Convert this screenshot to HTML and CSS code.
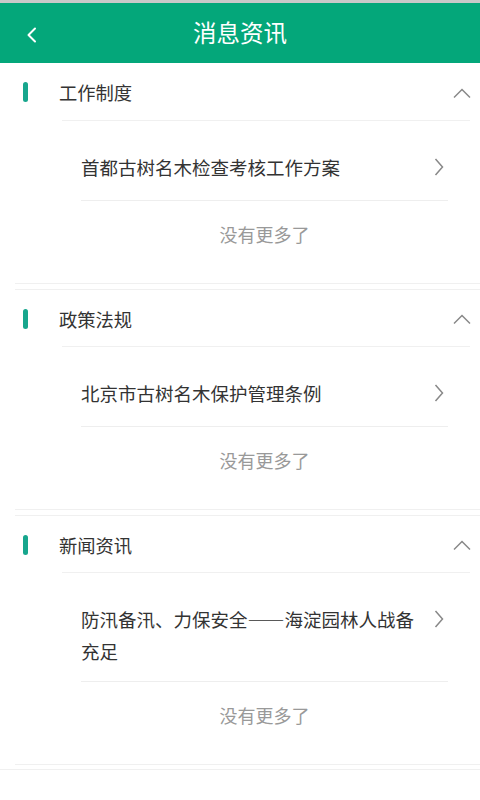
FILE: index.html
```html
<!DOCTYPE html>
<html lang="zh">
<head>
<meta charset="utf-8">
<link rel="stylesheet" href="styles.css">
</head>
<body>
<div class="status"></div>
<header class="topbar">
  <svg class="back" width="12" height="16" viewBox="0 0 12 16"><path d="M9 1.5 L2.5 8 L9 14.5" fill="none" stroke="#fff" stroke-width="2" stroke-linecap="round" stroke-linejoin="round"/></svg>
  <h1 class="title">消息资讯</h1>
</header>
<main>
  <section class="section">
    <div class="sec-head">
      <span class="mark"></span>
      <span class="sec-title">工作制度</span>
      <svg class="up" width="18" height="11" viewBox="0 0 18 11"><path d="M1 9.5 L9 1.5 L17 9.5" fill="none" stroke="#888" stroke-width="1.5"/></svg>
    </div>
    <div class="list">
      <div class="item">
        <span class="item-text">首都古树名木检查考核工作方案</span>
        <svg class="right" width="10" height="18" viewBox="0 0 10 18"><path d="M1.5 1 L8.5 9 L1.5 17" fill="none" stroke="#888" stroke-width="1.5"/></svg>
      </div>
      <div class="more">没有更多了</div>
    </div>
  </section>
  <section class="section">
    <div class="sec-head">
      <span class="mark"></span>
      <span class="sec-title">政策法规</span>
      <svg class="up" width="18" height="11" viewBox="0 0 18 11"><path d="M1 9.5 L9 1.5 L17 9.5" fill="none" stroke="#888" stroke-width="1.5"/></svg>
    </div>
    <div class="list">
      <div class="item">
        <span class="item-text">北京市古树名木保护管理条例</span>
        <svg class="right" width="10" height="18" viewBox="0 0 10 18"><path d="M1.5 1 L8.5 9 L1.5 17" fill="none" stroke="#888" stroke-width="1.5"/></svg>
      </div>
      <div class="more">没有更多了</div>
    </div>
  </section>
  <section class="section">
    <div class="sec-head">
      <span class="mark"></span>
      <span class="sec-title">新闻资讯</span>
      <svg class="up" width="18" height="11" viewBox="0 0 18 11"><path d="M1 9.5 L9 1.5 L17 9.5" fill="none" stroke="#888" stroke-width="1.5"/></svg>
    </div>
    <div class="list">
      <div class="item">
        <span class="item-text">防汛备汛、力保安全——海淀园林人战备充足</span>
        <svg class="right" width="10" height="18" viewBox="0 0 10 18"><path d="M1.5 1 L8.5 9 L1.5 17" fill="none" stroke="#888" stroke-width="1.5"/></svg>
      </div>
      <div class="more">没有更多了</div>
    </div>
  </section>
  <div class="page-end"></div>
</main>
</body>
</html>
```

FILE: styles.css
```css
* { box-sizing: border-box; }
html, body { margin: 0; padding: 0; background: #fff; }
body {
  font-family: "Noto Sans CJK SC", "Noto Sans", sans-serif;
  color: #333;
  width: 480px;
}
.status { height: 3px; background: #c9c9c9; }
.topbar {
  height: 60px;
  background: #04a77a;
  display: flex;
  align-items: center;
  justify-content: center;
  position: relative;
}
.back { position: absolute; left: 26px; top: 24px; }
.title {
  margin: 0;
  font-size: 23.5px;
  font-weight: normal;
  color: #fff;
  line-height: 1;
}
.section {
  margin-left: 15px;
  border-bottom: 1px solid #f0f0f0;
}
.section + .section {
  margin-top: 5px;
  border-top: 1px solid #f0f0f0;
}
.sec-head {
  height: 58px;
  display: flex;
  align-items: center;
  padding-left: 8px;
  padding-right: 9px;
  position: relative;
}
.section + .section .sec-head { height: 57px; }
.sec-head::after {
  content: "";
  position: absolute;
  left: 47px;
  right: 10px;
  bottom: 0;
  border-bottom: 1px solid #f0f0f0;
}
.mark {
  width: 5px;
  height: 20px;
  border-radius: 3px;
  background: #17a68d;
}
.sec-title {
  margin-left: 31px;
  font-size: 18.3px;
  color: #333;
  flex: 1;
}
.up { display: block; margin-top: 2px; }
.list {
  margin-left: 66px;
  margin-right: 32px;
}
.item {
  display: flex;
  align-items: flex-start;
  justify-content: space-between;
  min-height: 80px;
  padding-top: 29px;
  padding-bottom: 14px;
  border-top: 1px solid #fff;
  border-bottom: 1px solid #eeeeee;
}
.item-text {
  font-size: 18.5px;
  line-height: 32px;
  color: #333;
  max-width: 335px;
}
.right { display: block; margin-top: 7px; margin-right: 4px; flex-shrink: 0; }
.more {
  height: 82px;
  padding-top: 20px;
  text-align: center;
  font-size: 18px;
  line-height: 26px;
  color: #999;
}
.page-end {
  margin-top: 4px;
  border-top: 1px solid #f0f0f0;
}
```
